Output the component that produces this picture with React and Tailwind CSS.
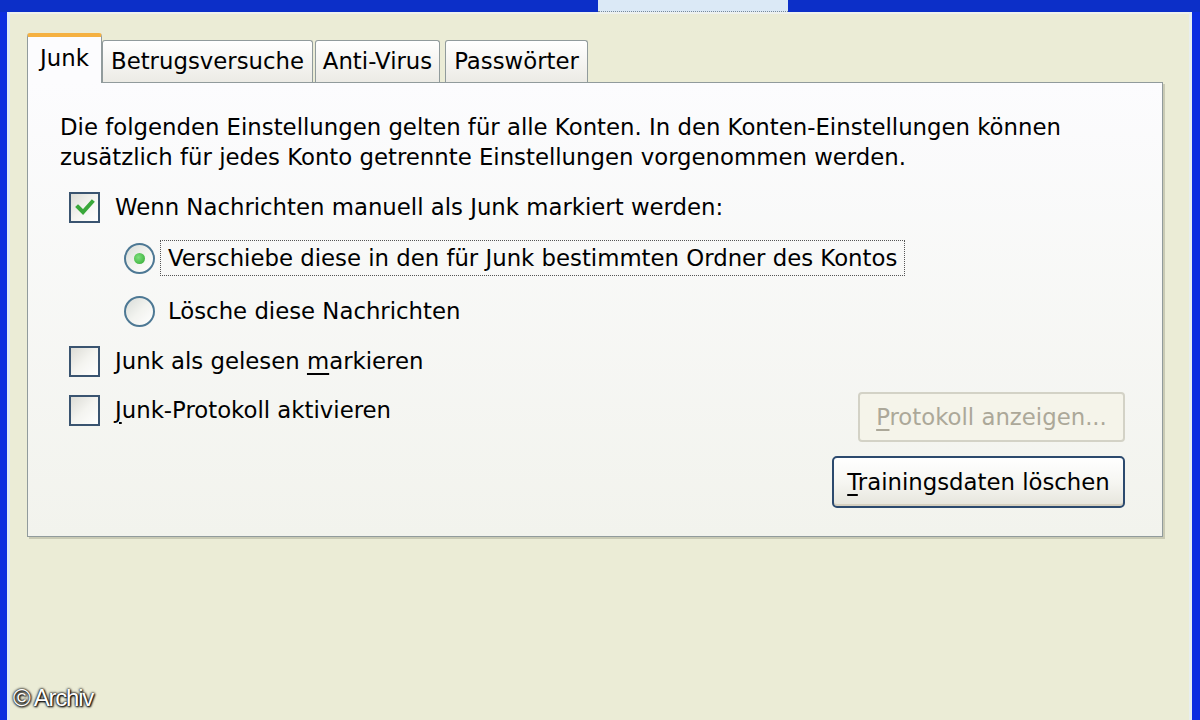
import React from "react";

const FONT = { fontFamily: '"DejaVu Sans", Tahoma, Verdana, sans-serif' };

function Checkbox({ checked }) {
  return (
    <div className="w-[31px] h-[31px] border-2 border-[#3a5470] bg-gradient-to-br from-[#dcdcd6] via-[#f4f4f0] to-white flex items-center justify-center shrink-0">
      {checked && (
        <svg width="20" height="18" viewBox="0 0 20 18">
          <path d="M3 9 L8 14 L17 4" fill="none" stroke="#3aa83a" strokeWidth="4" strokeLinecap="square" />
        </svg>
      )}
    </div>
  );
}

function Radio({ checked }) {
  return (
    <div className="w-[31px] h-[31px] rounded-full border-2 border-[#4d7894] bg-gradient-to-br from-[#d8dcd8] via-[#f2f3ef] to-white flex items-center justify-center shrink-0">
      {checked && <div className="w-[11px] h-[11px] rounded-full bg-[radial-gradient(circle_at_40%_40%,#7ee07e,#2ea82e)]" />}
    </div>
  );
}

function Tab({ w, active, children, className = "" }) {
  if (active) {
    return (
      <div className={`relative z-10 h-[50px] -mb-[1px] bg-[#fcfcfe] border-x border-[#919b9c] rounded-t-[3px] border-t-[4px] border-t-[#f5b142] flex items-center justify-center ${className}`} style={{ width: w }}>
        <span className="text-[22.8px] leading-none text-black -mt-[4px]">{children}</span>
      </div>
    );
  }
  return (
    <div className={`h-[42px] bg-gradient-to-b from-white to-[#ecebe5] border border-b-0 border-[#919b9c] rounded-t-[3px] flex items-center justify-center ${className}`} style={{ width: w }}>
      <span className="text-[22.8px] leading-none text-black">{children}</span>
    </div>
  );
}

export default function App() {
  return (
    <div className="relative w-[1200px] h-[720px] overflow-hidden bg-[#0b30d6] flex flex-col" style={FONT}>
      {/* top bar */}
      <div className="h-[12px] flex shrink-0">
        <div className="w-[598px] bg-[#0c2fc8]" />
        <div className="w-[190px] bg-[#dbe9f6] border-b border-dotted border-[#7a8a98]" />
        <div className="flex-1 bg-[#0c2fc8]" />
      </div>
      <div className="flex-1 flex">
        <div className="w-[7px] bg-[#0b2de0]" />
        <div className="w-[3px] bg-[#dfeaf6]" />
        <div className="flex-1 bg-[#ebecd6] border-t-2 border-[#eef1ee] pl-[17px] pt-[19px]">
          {/* tabs */}
          <div className="flex items-end h-[49px]">
            <Tab w={75} active>Junk</Tab>
            <Tab w={211}>Betrugsversuche</Tab>
            <Tab w={125} className="ml-[2px]">Anti-Virus</Tab>
            <Tab w={143} className="ml-[5px]">Passwörter</Tab>
          </div>
          {/* panel */}
          <div className="w-[1136px] h-[455px] border border-[#919b9c] shadow-[2px_2px_0_#c9cab4] bg-gradient-to-b from-[#fcfcfe] to-[#f2f3ed] pl-[32px] pr-[37px] pt-[29px] text-[22.8px] text-black">
            <div className="leading-[30px] whitespace-nowrap">
              <div>Die folgenden Einstellungen gelten für alle Konten. In den Konten-Einstellungen können</div>
              <div>zusätzlich für jedes Konto getrennte Einstellungen vorgenommen werden.</div>
            </div>
            <div className="mt-[17px] h-[36px] flex items-center pl-[9px] gap-[15px]">
              <Checkbox checked />
              <span>Wenn Nachrichten manuell als Junk markiert werden:</span>
            </div>
            <div className="mt-[15px] h-[36px] flex items-center pl-[64px] gap-[5px]">
              <Radio checked />
              <span className="border border-dotted border-[#555] px-[7px] h-[36px] flex items-center whitespace-nowrap">Verschiebe diese in den für Junk bestimmten Ordner des Kontos</span>
            </div>
            <div className="mt-[17px] h-[36px] flex items-center pl-[64px] gap-[13px]">
              <Radio />
              <span>Lösche diese Nachrichten</span>
            </div>
            <div className="mt-[14px] h-[36px] flex items-center pl-[9px] gap-[15px]">
              <Checkbox />
              <span>Junk als gelesen <span className="underline underline-offset-[4px]">m</span>arkieren</span>
            </div>
            <div className="mt-[13px] flex items-start justify-between">
              <div className="h-[36px] flex items-center pl-[9px] gap-[15px]">
                <Checkbox />
                <span><span className="underline underline-offset-[4px]">J</span>unk-Protokoll aktivieren</span>
              </div>
              <div className="w-[267px] h-[50px] rounded-[4px] border-2 border-[#d3d2c6] bg-[#f5f4ea] text-[#aca899] flex items-center justify-center whitespace-nowrap">
                <span><span className="underline underline-offset-[4px]">P</span>rotokoll anzeigen...</span>
              </div>
            </div>
            <div className="mt-[14px] flex justify-end">
              <div className="w-[293px] h-[52px] rounded-[5px] border-2 border-[#2c4a6e] bg-gradient-to-b from-white via-[#f6f6f2] to-[#e6e5dc] shadow-[inset_0_-2px_0_#d6d0c0] flex items-center justify-center whitespace-nowrap">
                <span><span className="underline underline-offset-[4px]">T</span>rainingsdaten löschen</span>
              </div>
            </div>
          </div>
        </div>
        <div className="w-[3px] bg-[#e8eef0]" />
        <div className="w-[8px] bg-[#0b2de0]" />
      </div>
      <div className="absolute left-[13px] bottom-[10px] text-white text-[24px] leading-none tracking-tighter [text-shadow:0_0_3px_#000,0_0_2px_#000,1px_1px_2px_#000]" style={{ fontFamily: '"Liberation Sans", Arial, sans-serif' }}>
        © Archiv
      </div>
    </div>
  );
}
